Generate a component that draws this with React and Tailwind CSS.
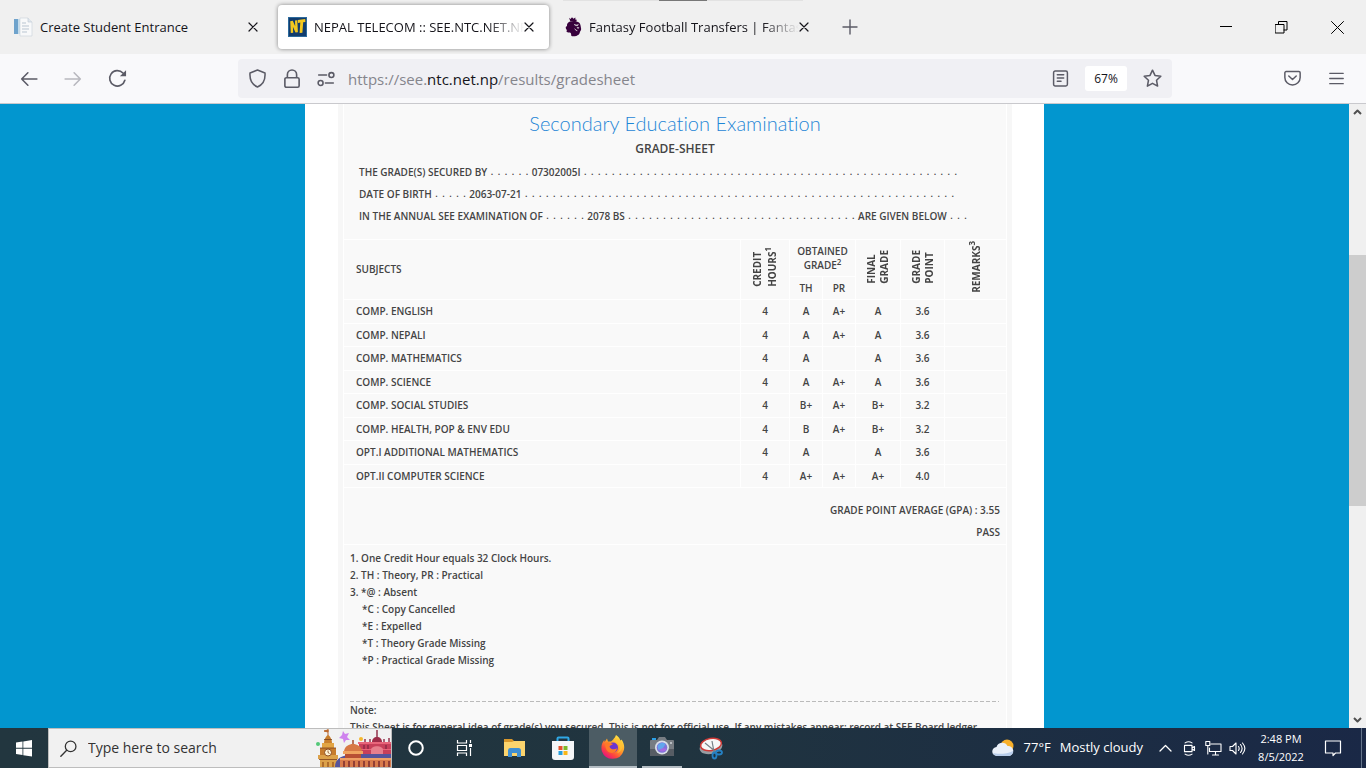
import React from 'react';

const subjects = [
  { name: 'COMP. ENGLISH', hours: 4, th: 'A', pr: 'A+', final: 'A', point: '3.6' },
  { name: 'COMP. NEPALI', hours: 4, th: 'A', pr: 'A+', final: 'A', point: '3.6' },
  { name: 'COMP. MATHEMATICS', hours: 4, th: 'A', pr: '', final: 'A', point: '3.6' },
  { name: 'COMP. SCIENCE', hours: 4, th: 'A', pr: 'A+', final: 'A', point: '3.6' },
  { name: 'COMP. SOCIAL STUDIES', hours: 4, th: 'B+', pr: 'A+', final: 'B+', point: '3.2' },
  { name: 'COMP. HEALTH, POP & ENV EDU', hours: 4, th: 'B', pr: 'A+', final: 'B+', point: '3.2' },
  { name: 'OPT.I ADDITIONAL MATHEMATICS', hours: 4, th: 'A', pr: '', final: 'A', point: '3.6' },
  { name: 'OPT.II COMPUTER SCIENCE', hours: 4, th: 'A+', pr: 'A+', final: 'A+', point: '4.0' },
];

const Icon = ({ size = 16, box = 16, className = '', children }) => (
  <svg
    width={size}
    height={size}
    viewBox={`0 0 ${box} ${box}`}
    className={`shrink-0 ${className}`}
    fill="none"
    stroke="currentColor"
    strokeWidth="1.4"
    strokeLinecap="round"
    strokeLinejoin="round"
    aria-hidden="true"
  >
    {children}
  </svg>
);

const CloseX = () => (
  <Icon size={10} box={10}>
    <path d="M1 1l8 8M9 1L1 9" strokeWidth="1.2" />
  </Icon>
);

const PageFavicon = () => (
  <svg width="20" height="20" viewBox="0 0 20 20" className="shrink-0" aria-hidden="true">
    <path d="M1 2h4v15H1z" fill="#6fa3cc" />
    <path d="M5 2h2v15H5z" fill="#c3dcec" />
    <path d="M7 1h8l4 4v14H7z" fill="#f8f9fa" stroke="#cfd6dc" strokeWidth=".7" />
    <path d="M15 1v4h4" fill="#dfe7ee" stroke="#c3ccd5" strokeWidth=".7" />
    <path d="M9 6h4M9 9h7M9 12h7M9 15h5" stroke="#b9c5d1" strokeWidth="1" />
  </svg>
);

const TelecomFavicon = () => (
  <svg width="19" height="20" viewBox="0 0 19 20" className="shrink-0" aria-hidden="true">
    <rect width="19" height="20" fill="#2c6a9c" />
    <rect x="1" y="1" width="17" height="18" fill="#123c6d" />
    <path d="M2.800 16L2.200 4.300l2.600-.5 2.400 5.400L7 3.500l2.300-.3.6 12-2.400.4-2.600-5.800.3 5.900z" fill="#f4c81e" />
    <path d="M9.800 2.900l7.400-.9.2 3-2.200.3-.8 10.400-2.800.4.7-10.500-2.300.3z" fill="#f4c81e" />
  </svg>
);

const LionFavicon = () => (
  <svg width="17" height="20" viewBox="0 0 17 20" className="shrink-0" aria-hidden="true">
    <path d="M4 .8l1.500 1.200L7 .3l1.500 1.500L10.300.4l.2 2.300 1.500.1-.8 1.400H5.300z" fill="#37003c" />
    <path d="M5 4.600c3-1.200 7-.8 9 1 1.800 1.600 1.500 3.700 2 5.400.6 2-.5 2.500-1 3.700-.5 1.700-.7 3-2.500 3.600-1 1.200-5.500 1.500-6.300.2 0-2-.2-2.400-1.200-3-1.500.3-2.800.1-3.800-1.500l1-.7C1 12.500.3 10.700 1 9.500l1-.2C1.600 7.300 3 5.300 5 4.600z" fill="#37003c" />
    <path d="M9 7.400l2.500.5 2-.3-1 1.200-2-.2zM11.800 10.500l2.200.1-1 1.200M9.500 11.500l1.500 2 1.500.3" fill="#f0f0f0" stroke="#f0f0f0" strokeWidth=".4" />
  </svg>
);

const tabs = [
  { title: 'Create Student Entrance', icon: PageFavicon, box: 'w-[274px] pl-[13px] pr-4', fade: '' },
  {
    title: 'NEPAL TELECOM :: SEE.NTC.NET.NP',
    icon: TelecomFavicon,
    box: 'w-[271px] pl-[10px] pr-[15px] bg-white rounded-[4px] shadow-[0_0_4px_rgba(0,0,0,0.45)]',
    fade: '[mask-image:linear-gradient(to_left,transparent,black_36px)]',
  },
  {
    title: 'Fantasy Football Transfers | Fantasy Premier League',
    icon: LionFavicon,
    box: 'w-[271px] pl-3 pr-[15px]',
    fade: '[mask-image:linear-gradient(to_left,transparent,black_36px)]',
  },
];

const TabStrip = () => (
  <header className="relative flex h-[54px] shrink-0 items-center bg-[#f0f0f0] text-[13px] text-[#15141a]">
    <div className="absolute left-[563px] top-0 h-px w-[240px] bg-[#e2e2e2]" />
    <div className="absolute left-[659px] top-0 h-px w-12 bg-[#777]" />
    <div role="tablist" className="flex items-center gap-1">
      {tabs.map((tab, i) => {
        const Favicon = tab.icon;
        return (
          <div key={tab.title} className={`flex h-11 items-center ${tab.box}`}>
            <button type="button" role="tab" aria-selected={i === 1} className="flex min-w-0 flex-1 items-center gap-[7px]">
              <Favicon />
              <span className={`flex-1 overflow-hidden whitespace-nowrap text-left leading-[22px] ${tab.fade}`}>{tab.title}</span>
            </button>
            <button type="button" aria-label={`Close ${tab.title}`}>
              <CloseX />
            </button>
          </div>
        );
      })}
    </div>
    <button type="button" aria-label="New tab" className="ml-[18px] text-[#5b5b66]">
      <Icon size={16}>
        <path d="M8 1v14M1 8h14" />
      </Icon>
    </button>
    <div className="ml-auto flex items-center gap-[43px] pr-[22px] text-black">
      <button type="button" aria-label="Minimize">
        <Icon size={12} box={12}>
          <path d="M0 5.500h12" strokeWidth="1" />
        </Icon>
      </button>
      <button type="button" aria-label="Restore">
        <Icon size={13} box={13}>
          <path d="M.5 3.500h8.500V12H.5zM3.500 3.500v-3H12V9H9" strokeWidth="1" />
        </Icon>
      </button>
      <button type="button" aria-label="Close window">
        <Icon size={13} box={13}>
          <path d="M.5.5l12 12M12.500.5l-12 12" strokeWidth="1" />
        </Icon>
      </button>
    </div>
  </header>
);

const NavBar = () => (
  <nav className="flex h-[50px] shrink-0 items-center border-b border-[#c9c9cd] bg-[#f9f9fb] text-[#5b5b66]">
    <div className="flex w-[238px] shrink-0 items-center gap-[26px] pl-5">
      <button type="button" aria-label="Back">
        <Icon size={18}>
          <path d="M15 8H1.500M7 2.500L1.500 8 7 13.500" />
        </Icon>
      </button>
      <button type="button" aria-label="Forward" className="text-[#b8b8be]">
        <Icon size={18}>
          <path d="M1 8h13.500M9 2.500L14.500 8 9 13.500" />
        </Icon>
      </button>
      <button type="button" aria-label="Reload">
        <Icon size={19}>
          <path d="M14.200 9.500A6.500 6.500 0 1 1 12.600 3.400" />
          <path d="M15.200 1v5.200H10z" fill="currentColor" stroke="none" />
        </Icon>
      </button>
    </div>
    <div className="flex h-[39px] flex-1 items-center rounded-[4px] bg-[#f0f0f4] px-[10px]">
      <div className="flex items-center gap-[15px]">
        <Icon size={19}>
          <path d="M8 .9l6.300 2.400c.4 5-1.300 9.800-6.300 11.900C3 13.100 1.300 8.300 1.700 3.300z" strokeWidth="1.300" />
        </Icon>
        <Icon size={20}>
          <path d="M4.300 7V4.500a3.700 3.700 0 0 1 7.400 0V7M3.500 7h9a1.200 1.200 0 0 1 1.200 1.200v5.200a1.200 1.200 0 0 1-1.200 1.200h-9a1.200 1.200 0 0 1-1.200-1.200V8.200A1.200 1.200 0 0 1 3.500 7z" strokeWidth="1.300" />
        </Icon>
        <Icon size={18}>
          <path d="M1.500 4.500h7M7.500 11.500h7" />
          <circle cx="12.800" cy="4.500" r="2.200" />
          <circle cx="3.200" cy="11.500" r="2.200" />
        </Icon>
      </div>
      <div className="relative ml-[13px] flex-1">
        <span aria-hidden="true" className="whitespace-nowrap text-[15px] text-[#85858c]">
          https://see.<span className="text-[#15141a]">ntc.net.np</span>/results/gradesheet
        </span>
        <input type="text" aria-label="Address" className="absolute inset-0 w-full bg-transparent outline-none" />
      </div>
      <div className="flex items-center gap-4">
        <button type="button" aria-label="Reader view">
          <Icon size={17}>
            <path d="M3 1h10a1.500 1.500 0 0 1 1.500 1.500v11A1.500 1.500 0 0 1 13 15H3a1.500 1.500 0 0 1-1.500-1.500v-11A1.500 1.500 0 0 1 3 1zM5 4.500h6M5 7.500h6M5 10.500h3.500" />
          </Icon>
        </button>
        <button type="button" className="h-[25px] w-[42px] rounded-[3px] bg-white text-xs text-[#15141a]">
          67%
        </button>
        <button type="button" aria-label="Bookmark this page">
          <Icon size={19}>
            <path d="M8 1l2.100 4.400 4.900.7-3.600 3.400.9 4.900L8 12.100l-4.300 2.300.9-4.900L1 6.100l4.900-.7z" strokeWidth="1.300" />
          </Icon>
        </button>
      </div>
    </div>
    <div className="flex w-[194px] shrink-0 items-center justify-end gap-7 pr-[22px]">
      <button type="button" aria-label="Save to Pocket">
        <Icon size={17}>
          <path d="M2 1.500h12a1.200 1.200 0 0 1 1.200 1.200V7A7.200 7.200 0 0 1 .8 7V2.700A1.200 1.200 0 0 1 2 1.500zM4.500 5.700L8 9l3.500-3.300" />
        </Icon>
      </button>
      <button type="button" aria-label="Open application menu">
        <Icon size={15}>
          <path d="M.8 2.500h14.400M.8 8h14.400M.8 13.500h14.400" />
        </Icon>
      </button>
    </div>
  </nav>
);

const Dots = ({ count }) => (
  <span className="whitespace-nowrap font-['DejaVu_Sans'] text-[11px] font-normal">{Array(count).fill('.').join(' ')}</span>
);

const Vertical = ({ children }) => (
  <span className="inline-block rotate-180 text-left font-bold leading-[13px] [writing-mode:vertical-rl]">{children}</span>
);

// preflight shifts sup with a physical offset, which is wrong inside rotated text
const Sup = ({ children }) => <sup className="static align-super text-[8px] leading-none">{children}</sup>;

const cell = 'border border-white p-0';

const GradeTable = () => (
  <table className="w-full table-fixed border-collapse text-center">
    <colgroup>
      <col />
      <col className="w-[49px]" />
      <col className="w-[33px]" />
      <col className="w-[33px]" />
      <col className="w-[45px]" />
      <col className="w-[44px]" />
      <col className="w-[62px]" />
    </colgroup>
    <thead>
      <tr className="h-[37px]">
        <th rowSpan={2} className={`${cell} pl-3 text-left font-semibold`}>SUBJECTS</th>
        <th rowSpan={2} className={cell}><Vertical>CREDIT<br />HOURS<Sup>1</Sup></Vertical></th>
        <th colSpan={2} className={`${cell} font-semibold leading-[14px]`}>OBTAINED<br />GRADE<Sup>2</Sup></th>
        <th rowSpan={2} className={cell}><Vertical>FINAL<br />GRADE</Vertical></th>
        <th rowSpan={2} className={cell}><Vertical>GRADE<br />POINT</Vertical></th>
        <th rowSpan={2} className={cell}><Vertical>REMARKS<Sup>3</Sup></Vertical></th>
      </tr>
      <tr className="h-[23px]">
        <th className={`${cell} font-semibold`}>TH</th>
        <th className={`${cell} font-semibold`}>PR</th>
      </tr>
    </thead>
    <tbody>
      {subjects.map((s) => (
        <tr key={s.name} className="odd:h-6 even:h-[23px]">
          <td className={`${cell} pl-3 text-left`}>{s.name}</td>
          <td className={cell}>{s.hours}</td>
          <td className={cell}>{s.th}</td>
          <td className={cell}>{s.pr}</td>
          <td className={cell}>{s.final}</td>
          <td className={cell}>{s.point}</td>
          <td className={cell}></td>
        </tr>
      ))}
    </tbody>
  </table>
);

const GradeSheet = () => (
  <article className="h-full overflow-hidden bg-[#f7f7f7] px-[5px]">
    <div className="bg-[#f9f9f9] text-[10px] font-semibold leading-[17px] text-[#444]">
      <div className="h-[135px] border-x border-white pt-[6px]">
        <h1 className="text-center font-['Lato'] text-[20px] font-light leading-[26px] text-[#1f86d6] [font-variant-ligatures:none]">Secondary Education Examination</h1>
        <h2 className="mt-1 text-center text-xs font-semibold leading-[18px]">GRADE-SHEET</h2>
        <div className="mt-[3px] pl-[15px] leading-[22px]">
          <p className="flex gap-[3px] whitespace-nowrap"><span>THE GRADE(S) SECURED BY</span><Dots count={6} /><span>07302005I</span><Dots count={54} /></p>
          <p className="flex gap-[3px] whitespace-nowrap"><span>DATE OF BIRTH</span><Dots count={5} /><span>2063-07-21</span><Dots count={62} /></p>
          <p className="flex gap-[3px] whitespace-nowrap"><span>IN THE ANNUAL SEE EXAMINATION OF</span><Dots count={6} /><span>2078 BS</span><Dots count={33} /><span>ARE GIVEN BELOW</span><Dots count={3} /></p>
        </div>
      </div>
      <GradeTable />
      <div className="h-[57px] border-x border-b border-white pr-[6px] pt-[11px] text-right leading-[22px]">
        <p>GRADE POINT AVERAGE (GPA) : 3.55</p>
        <p>PASS</p>
      </div>
      <div className="border-x border-white pl-[6px] pr-[7px] pt-[5px]">
        <p>1. One Credit Hour equals 32 Clock Hours.</p>
        <p>2. TH : Theory, PR : Practical</p>
        <p>3. *@ : Absent</p>
        <div className="pl-3">
          <p>*C : Copy Cancelled</p>
          <p>*E : Expelled</p>
          <p>*T : Theory Grade Missing</p>
          <p>*P : Practical Grade Missing</p>
        </div>
        <hr className="mt-8 h-px border-0 bg-[repeating-linear-gradient(90deg,#bbb_0_4px,transparent_4px_6px)]" />
        <p>Note:</p>
        <p className="whitespace-nowrap">This Sheet is for general idea of grade(s) you secured. This is not for official use. If any mistakes appear; record at SEE Board ledger</p>
      </div>
    </div>
  </article>
);

const ScrollBar = () => (
  <div className="flex w-[17px] shrink-0 flex-col items-center justify-between bg-[#f0f0f0] py-1 text-[#505050]">
    <Icon size={9} box={9}>
      <path d="M1 6l3.500-3.500L8 6" strokeWidth="2" strokeLinecap="butt" />
    </Icon>
    <div className="relative w-full flex-1">
      <div className="absolute inset-x-0 top-[23%] h-[42%] bg-[#cdcdcd]" />
    </div>
    <Icon size={9} box={9}>
      <path d="M1 3l3.500 3.500L8 3" strokeWidth="2" strokeLinecap="butt" />
    </Icon>
  </div>
);

const SearchArt = () => (
  <svg width="76" height="38" viewBox="0 0 76 38" className="shrink-0 self-end" aria-hidden="true">
    <circle cx="3" cy="15" r="2" fill="#52c878" />
    <circle cx="46" cy="10" r="2" fill="#f5b82e" />
    <path d="M28 2l2 3 4-1-2 4 3 3-4 0-2 3-1-4-4-1 3-3z" fill="#cf83ee" />
    <path d="M13 0v8M13 1l-4 1 4 1z" stroke="#b9652a" fill="#e9842c" />
    <path d="M9 14c0-4 2-7 4-8 2 1 4 4 4 8z" fill="#c97f2c" />
    <path d="M7 14h12v5H7z" fill="#e2a443" />
    <path d="M5 19h16v11H5z" fill="#c77c2d" />
    <path d="M3 26h20v4H3zM5 30h17v8H5z" fill="#dca149" />
    <circle cx="13" cy="23.500" r="3.500" fill="#fff4d6" stroke="#8f4e1e" />
    <path d="M13 21.500v2l1.500 1M5 19h16M4 30.500h18M9 10.500h8" stroke="#7d3f1b" strokeWidth=".8" fill="none" />
    <path d="M8 33v5M13 33v5M18 33v5" stroke="#b06d2a" strokeWidth="2" />
    <path d="M44 14h32v12H44z" fill="#c8405a" />
    <path d="M57 13c0-3 2-5 5-5s5 2 5 5z" fill="#9d2c48" />
    <path d="M62 1v8M50 10v4M74 9v5M55 10v4M69 10v4" stroke="#93334c" strokeWidth="1.500" />
    <path d="M43 13h33v2H43zM44 20h32v1H44z" fill="#e8657a" />
    <path d="M56 21c0-5 12-5 12 0v5H56z" fill="#e77f8d" />
    <path d="M49 16v4M53 16v4M71 16v4" stroke="#8c2a46" strokeWidth="1.500" />
    <path d="M20 38c0-10 9-13 25-13h31v13z" fill="#56549b" />
    <path d="M29 22c1-5 5-7 9-7s8 2 9 7z" fill="#d77945" />
    <path d="M38 11v4" stroke="#a64c2c" strokeWidth="1.500" />
    <path d="M28 22h20v3H28z" fill="#f0a460" />
    <path d="M30 25h16v4H30z" fill="#b85034" />
    <path d="M25 29h51v9H25z" fill="#d97b4c" />
    <path d="M25 29h51v2H25z" fill="#efa065" />
    <path d="M29 32v6M34 32v6M39 32v6M44 32v6M49 32v6M54 32v6M59 32v6M64 32v6M69 32v6M74 32v6" stroke="#933f35" strokeWidth="2" />
  </svg>
);

const TaskView = () => (
  <svg width="17" height="16" viewBox="0 0 17 16" fill="none" stroke="#fff" aria-hidden="true">
    <path d="M1.500 0v3h9V0M1.500 5.500h9v5h-9zM1.500 16v-3h9v3M14.500 0v3M14.500 8v8" strokeWidth="1.200" />
    <path d="M13 4h3v3h-3z" fill="#fff" stroke="none" />
  </svg>
);

const Explorer = () => (
  <svg width="23" height="20" viewBox="0 0 23 20" aria-hidden="true">
    <path d="M1 1h8l2 2h11v5H1z" fill="#d9982c" />
    <path d="M1 4h8l2-1h11v15H1z" fill="#fbd46d" />
    <path d="M5 19v-6.500A2.500 2.500 0 0 1 7.500 10h8a2.500 2.500 0 0 1 2.500 2.500V19h-4v-4H9v4z" fill="#3f8fd2" />
  </svg>
);

const Store = () => (
  <svg width="24" height="25" viewBox="0 0 24 25" aria-hidden="true">
    <path d="M6.500 6V2.500a1 1 0 0 1 1-1h9a1 1 0 0 1 1 1V6" fill="none" stroke="#2fa8e5" strokeWidth="2" />
    <path d="M1 5h22v16a3 3 0 0 1-3 3H4a3 3 0 0 1-3-3z" fill="#f5f6f7" />
    <path d="M7.500 10h4v4h-4z" fill="#e5502c" />
    <path d="M12.500 10h4v4h-4z" fill="#7db928" />
    <path d="M7.500 15h4v4h-4z" fill="#259fdd" />
    <path d="M12.500 15h4v4h-4z" fill="#f8b719" />
  </svg>
);

const Firefox = () => (
  <svg width="24" height="24" viewBox="0 0 24 24" aria-hidden="true">
    <defs>
      <linearGradient id="fox" x1="0.85" y1="0.1" x2="0.25" y2="0.95">
        <stop offset="0" stopColor="#ffe643" />
        <stop offset="0.45" stopColor="#ff9a28" />
        <stop offset="0.75" stopColor="#ff493b" />
        <stop offset="1" stopColor="#e8157c" />
      </linearGradient>
    </defs>
    <path d="M15 0c3 2 4 4 4.500 6l1-1.500C23 8 24 12 22.500 16A11.400 11.400 0 0 1 1 16.500C-.3 12 .7 8 3.300 5l.3 2L6 3.500 7 6.500h3c2-1.500 4-3.500 5-6.500z" fill="url(#fox)" />
    <circle cx="12" cy="12.500" r="5" fill="#6b35cf" />
    <path d="M4 8c2-1 4-1 6 .3l2 .7c-1.200 1.300-3 1.200-3.500 2.400.8 2.600 4 4.300 7.500 1.500-.6 4-4 6-7.200 4.700C5.500 16.500 4 12 4 8z" fill="#ff7a28" />
    <path d="M13 3c-1 3 2 4 4 6s2.500 6-1 9c5-1 7-7 4.500-12L18 4z" fill="#ffc334" opacity=".75" />
  </svg>
);

const Camera = () => (
  <svg width="24" height="20" viewBox="0 0 24 20" aria-hidden="true">
    <path d="M2 1h4v4H2z" fill="#2b9fe6" />
    <path d="M7 3l2-3h6l2 3h6a1 1 0 0 1 1 1v14a1 1 0 0 1-1 1H1a1 1 0 0 1-1-1V4a1 1 0 0 1 1-1z" fill="#777d83" />
    <path d="M0 12h24v6a1 1 0 0 1-1 1H1a1 1 0 0 1-1-1z" fill="#575d64" />
    <circle cx="12" cy="10.500" r="7" fill="#d9dfe7" />
    <circle cx="12" cy="10.500" r="5.300" fill="#7f74d8" />
    <path d="M7.500 9a5 5 0 0 1 8-2l-3 5-4 1z" fill="#62a6ed" />
    <path d="M9 13l4-2 4 1a5 5 0 0 1-8 1z" fill="#a66be0" />
    <circle cx="21" cy="6" r="1" fill="#ced3d7" />
  </svg>
);

const Snip = () => (
  <svg width="24" height="23" viewBox="0 0 24 23" aria-hidden="true">
    <ellipse cx="12" cy="10" rx="11.500" ry="7" fill="#989da2" transform="rotate(-12 12 10)" />
    <ellipse cx="12" cy="7.500" rx="10.500" ry="6" fill="#f7f7f7" stroke="#cf3a37" strokeWidth="1.500" transform="rotate(-10 12 7.500)" />
    <path d="M6 6l11 9M13 4l2 11" stroke="#777f86" strokeWidth="1.200" />
    <ellipse cx="20" cy="15.500" rx="3" ry="2" fill="none" stroke="#2580c3" strokeWidth="1.800" />
    <ellipse cx="15.500" cy="18.500" rx="2" ry="3" fill="none" stroke="#2580c3" strokeWidth="1.800" />
  </svg>
);

const Cortana = () => (
  <svg width="16" height="16" viewBox="0 0 16 16" aria-hidden="true">
    <circle cx="8" cy="8" r="6.800" fill="none" stroke="#fff" strokeWidth="2" />
  </svg>
);

const apps = [
  { name: 'Cortana', icon: Cortana, box: 'w-12' },
  { name: 'Task View', icon: TaskView, box: 'w-12' },
  { name: 'File Explorer', icon: Explorer, box: 'w-[52px]' },
  { name: 'Microsoft Store', icon: Store, box: 'w-[46px]' },
  { name: 'Firefox', icon: Firefox, box: 'ml-[3px] w-12 border-b-2 border-[#b4bdc3] bg-[#4c5c64]' },
  { name: 'Camera', icon: Camera, box: 'ml-[5px] w-10 border-b-2 border-[#b4bdc3]' },
  { name: 'Snipping Tool', icon: Snip, box: 'ml-[5px] w-12' },
];

const Taskbar = () => (
  <footer className="flex h-10 shrink-0 items-center bg-linear-to-r from-[#22363f] via-[#20343f] to-[#1a2846] text-white">
    <button type="button" aria-label="Start" className="flex h-full w-12 shrink-0 items-center justify-center">
      <svg width="16" height="17" viewBox="0 0 16 17" fill="#fff" aria-hidden="true">
        <path d="M0 2.500l6.500-1v6.300H0zM7.300 1.400L16 0v7.800H7.300zM0 8.800h6.500V15L0 14zM7.300 8.800H16v7.700l-8.700-1.300z" />
      </svg>
    </button>
    <div className="flex h-full w-[344px] items-center border border-[#bdbdbd] bg-[#f1f1f1] pl-[11px] text-[#333]">
      <Icon size={17}>
        <circle cx="10" cy="6" r="5" strokeWidth="1.200" />
        <path d="M6.300 9.700L.8 15.200" strokeWidth="1.300" />
      </Icon>
      <input
        type="text"
        aria-label="Type here to search"
        placeholder="Type here to search"
        className="ml-[11px] min-w-0 flex-1 bg-transparent text-sm outline-none placeholder:text-[#333]"
      />
      <SearchArt />
    </div>
    {apps.map((app) => {
      const AppIcon = app.icon;
      return (
        <button key={app.name} type="button" aria-label={app.name} className={`flex h-full shrink-0 items-center justify-center ${app.box}`}>
          <AppIcon />
        </button>
      );
    })}
    <div className="ml-auto flex h-full items-center">
      <button type="button" className="flex items-center gap-[9px] whitespace-nowrap text-[13px]">
        <svg width="23" height="18" viewBox="0 0 23 18" aria-hidden="true">
          <circle cx="15" cy="7" r="6.500" fill="#f8b02b" />
          <path d="M5 17a4.500 4.500 0 0 1-.5-9A6 6 0 0 1 15.500 7 5 5 0 0 1 17 17z" fill="#eaf0f9" />
          <path d="M1 14c4 1.500 15 1 20-2a4.500 4.500 0 0 1-4 5H5a4.500 4.500 0 0 1-4-3z" fill="#b8cdea" />
        </svg>
        <span>77°F</span>
        <span>Mostly cloudy</span>
      </button>
      <button type="button" aria-label="Show hidden icons" className="ml-4">
        <Icon size={13} box={13}>
          <path d="M1 9l5.500-5.500L12 9" strokeWidth="1.300" />
        </Icon>
      </button>
      <button type="button" aria-label="Meet Now" className="ml-[10px]">
        <Icon size={15} box={12}>
          <path d="M2 3.500h6v5H2zM8 5.500l2-1v3l-2-1M2.500 1.500c1.500-1 4-1 5.500 0M2.500 10.500c1.500 1 4 1 5.500 0" strokeWidth=".9" />
        </Icon>
      </button>
      <button type="button" aria-label="Network" className="ml-2">
        <Icon size={17} box={17}>
          <path d="M6 4h10v7.500H4.500V8M.8 1.500h4v4h-4zM2.800 5.500V14M10.500 11.500v3M7.500 15h6" strokeWidth="1.100" />
        </Icon>
      </button>
      <button type="button" aria-label="Volume" className="ml-[7px]">
        <Icon size={17} box={17}>
          <path d="M1 6.500h2.500L7 3v11l-3.500-3.500H1zM9.500 6.500c1 1.500 1 2.500 0 4M11.500 4.500c2 2.500 2 5.500 0 8M13.500 3c3 3.500 3 7.500 0 11" strokeWidth="1.100" />
        </Icon>
      </button>
      <div className="ml-[10px] w-[50px] whitespace-nowrap text-center text-[11px] leading-[18px]">
        <div>2:48 PM</div>
        <div>8/5/2022</div>
      </div>
      <button type="button" aria-label="Notifications" className="ml-[18px]">
        <Icon size={18} box={18}>
          <path d="M1.500 2h15v12h-5L9 16.500V14H1.500z" strokeWidth="1.200" />
        </Icon>
      </button>
      <div className="ml-[19px] mr-1 h-full w-px bg-[#64748a]" />
    </div>
  </footer>
);

export default function App() {
  return (
    <div className="flex h-screen flex-col overflow-hidden bg-[#0296cf] font-['Open_Sans','Noto_Sans',sans-serif]">
      <TabStrip />
      <NavBar />
      <div className="flex min-h-0 flex-1">
        <main className="min-w-0 flex-1 overflow-hidden">
          <div className="mx-auto h-full w-full max-w-[739px] bg-white pl-[33px] pr-8">
            <GradeSheet />
          </div>
        </main>
        <ScrollBar />
      </div>
      <Taskbar />
    </div>
  );
}
